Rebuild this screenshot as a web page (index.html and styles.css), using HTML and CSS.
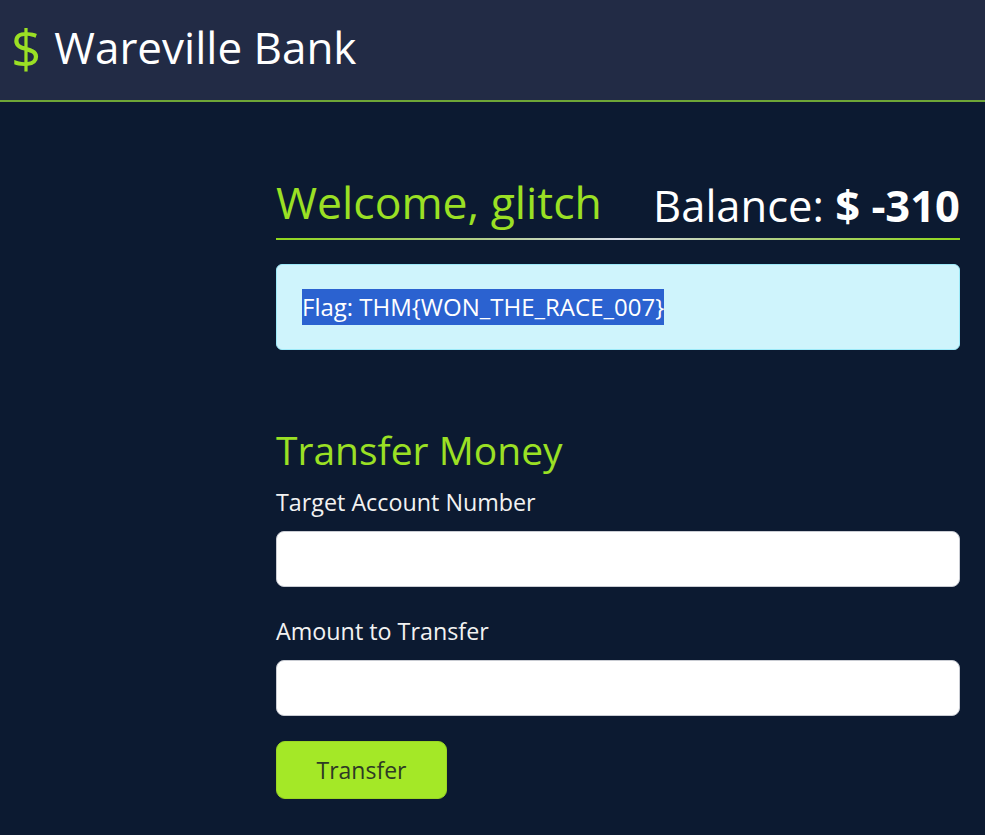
FILE: index.html
```html
<!DOCTYPE html>
<html lang="en">
<head>
<meta charset="utf-8">
<title>Wareville Bank</title>
<link rel="stylesheet" href="styles.css">
</head>
<body>
<header class="topbar">
  <span class="logo-mark">$</span>
  <span class="brand">Wareville Bank</span>
</header>
<main class="page">
  <aside class="side"></aside>
  <section class="content">
    <div class="welcome-row">
      <h2 class="welcome">Welcome, glitch</h2>
      <div class="balance">Balance: <strong>$ -310</strong></div>
    </div>
    <div class="alert"><span class="selected">Flag: THM{WON_THE_RACE_007}</span></div>
    <h3 class="section-title">Transfer Money</h3>
    <form class="transfer-form">
      <label class="field-label" for="acct">Target Account Number</label>
      <input class="field-input" id="acct" type="text">
      <label class="field-label" for="amount">Amount to Transfer</label>
      <input class="field-input last" id="amount" type="text">
      <button class="btn" type="button">Transfer</button>
    </form>
  </section>
</main>
</body>
</html>
```
FILE: styles.css
```css
html, body {
  margin: 0;
  padding: 0;
}
body {
  background: #0c1a31;
  color: #ffffff;
  font-family: "Open Sans", "Noto Sans", sans-serif;
}
.topbar {
  box-sizing: border-box;
  height: 102px;
  background: #222b45;
  border-bottom: 2px solid #6ea637;
  display: flex;
  align-items: center;
  gap: 13px;
  padding: 0 0 6px 11px;
}
.logo-mark {
  color: #9be024;
  font-size: 53px;
  line-height: 1;
}
.brand {
  font-size: 44px;
  line-height: 1;
  color: #ffffff;
}
.page {
  display: grid;
  grid-template-columns: 276px 1fr;
  padding-right: 25px;
}
.content {
  padding-top: 77px;
  padding-bottom: 30px;
}
.welcome-row {
  display: flex;
  justify-content: space-between;
  align-items: flex-end;
  padding-bottom: 13px;
  background: linear-gradient(90deg, #8fd61c 0%, #b4cf8c 30%, #d9dce6 50%, #b4cf8c 70%, #8fd61c 100%) left bottom / 100% 2px no-repeat;
}
.welcome {
  margin: 0 0 3px 0;
  font-size: 44.5px;
  line-height: 45px;
  font-weight: 400;
  color: #9be024;
}
.balance {
  font-size: 43.5px;
  line-height: 42px;
  color: #ffffff;
}
.balance strong {
  font-weight: 700;
}
.alert {
  margin-top: 24px;
  padding: 24px 25px;
  background: #cff4fc;
  border: 1px solid #9eeaf9;
  border-radius: 6px;
  font-size: 24px;
  line-height: 36px;
}
.selected {
  display: inline-block;
  background: #2b62d0;
  color: #ffffff;
  vertical-align: top;
}
.section-title {
  margin: 77px 0 0 0;
  font-size: 39px;
  line-height: 46px;
  font-weight: 400;
  color: #9be024;
}
.transfer-form {
  display: flex;
  flex-direction: column;
  align-items: stretch;
  margin-top: 16px;
}
.field-label {
  font-size: 23.3px;
  line-height: 26px;
  color: #f2f2f2;
  margin-bottom: 16px;
}
.field-input {
  box-sizing: border-box;
  height: 56px;
  border: 1px solid #c9ccd3;
  border-radius: 8px;
  background: #ffffff;
  margin-bottom: 31px;
  font-size: 20px;
  padding: 0 12px;
}
.field-input.last {
  margin-bottom: 25px;
}
.btn {
  align-self: flex-start;
  width: 171px;
  height: 58px;
  border: 1px solid #9bd723;
  border-radius: 9px;
  background: #a4e827;
  color: #2e3a25;
  font-family: "Open Sans", "Noto Sans", sans-serif;
  font-size: 23px;
  padding: 0;
  cursor: pointer;
}
```
